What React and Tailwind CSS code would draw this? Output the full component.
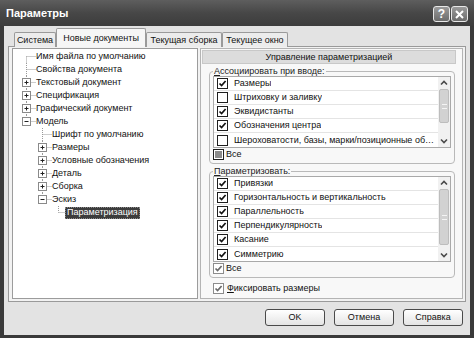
import React from "react";

const tree = [
  { t: "Имя файла по умолчанию", l: 0, first: true },
  { t: "Свойства документа", l: 0 },
  { t: "Текстовый документ", l: 0, e: "+" },
  { t: "Спецификация", l: 0, e: "+" },
  { t: "Графический документ", l: 0, e: "+" },
  { t: "Модель", l: 0, e: "-", last: true },
  { t: "Шрифт по умолчанию", l: 1 },
  { t: "Размеры", l: 1, e: "+" },
  { t: "Условные обозначения", l: 1, e: "+" },
  { t: "Деталь", l: 1, e: "+" },
  { t: "Сборка", l: 1, e: "+" },
  { t: "Эскиз", l: 1, e: "-", last: true },
  { t: "Параметризация", l: 2, last: true, sel: true },
];

function TreeGutter({ l, e, first, last }) {
  const w = 23 + 16 * l;
  const cx = 13.5 + 16 * l;
  const y1 = first ? 6.5 : 0;
  const y2 = last ? 6.5 : 13;
  return (
    <svg width={w} height="13" className="shrink-0">
      <line x1={cx} y1={y1} x2={cx} y2={y2} stroke="#9a9a9a" strokeDasharray="1 1" />
      <line x1={cx} y1="6.5" x2={cx + 9} y2="6.5" stroke="#9a9a9a" strokeDasharray="1 1" />
      {e && (
        <g>
          <rect x={cx - 4} y="2.5" width="8" height="8" fill="#fff" stroke="#8a8a8a" />
          <line x1={cx - 2} y1="6.5" x2={cx + 2} y2="6.5" stroke="#222" />
          {e === "+" && <line x1={cx} y1="4.5" x2={cx} y2="8.5" stroke="#222" />}
        </g>
      )}
    </svg>
  );
}

function Check({ state, light }) {
  return (
    <span
      className={
        light
          ? "w-[11px] h-[11px] border border-[#8c8c8c] bg-white flex items-center justify-center shrink-0"
          : "w-[11px] h-[11px] border border-[#1e1e1e] bg-white flex items-center justify-center shrink-0"
      }
    >
      {state === "on" && (
        <svg width="9" height="9" viewBox="0 0 9 9">
          <path d="M1.5 4.5 L3.6 6.6 L7.6 2" fill="none" stroke={light ? "#6a6a6a" : "#111"} strokeWidth="1.7" />
        </svg>
      )}
      {state === "mixed" && <span className="w-[7px] h-[7px] bg-[#8a8a8a]" />}
    </span>
  );
}

function Chevron({ up }) {
  return (
    <svg width="8" height="6" viewBox="0 0 8 6">
      <path d={up ? "M1 4.5 L4 1.5 L7 4.5" : "M1 1.5 L4 4.5 L7 1.5"} fill="none" stroke="#4a4a4a" strokeWidth="1.6" />
    </svg>
  );
}

function ScrollBar({ thumb }) {
  return (
    <div className="w-[12px] bg-[#f1f1f1] flex flex-col items-stretch shrink-0">
      <div className="h-[12px] flex items-center justify-center">
        <Chevron up />
      </div>
      <div className={thumb + " mx-[1px] rounded-[2px] bg-[#d2d2d2] border border-[#bdbdbd] flex items-center justify-center"}>
        <div className="w-[5px] h-[5px] border-y border-[#f4f4f4]" />
      </div>
      <div className="flex-1" />
      <div className="h-[12px] flex items-center justify-center">
        <Chevron />
      </div>
    </div>
  );
}

function List({ items, thumb }) {
  return (
    <div className="flex border border-[#a9a9a9] bg-white min-w-0">
      <div className="flex-1 min-w-0 flex flex-col">
        {items.map((it, i) => (
          <div key={i} className="h-[14px] flex items-center gap-[6px] pl-[3px] pr-[2px] border-b border-[#e4e4e4] last:border-b-0 min-w-0">
            <Check state={it.c ? "on" : "off"} />
            <span className="min-w-0 truncate whitespace-nowrap">{it.t}</span>
          </div>
        ))}
      </div>
      <ScrollBar thumb={thumb} />
    </div>
  );
}

const list1 = [
  { t: "Размеры", c: true },
  { t: "Штриховку и заливку", c: false },
  { t: "Эквидистанты", c: true },
  { t: "Обозначения центра", c: true },
  { t: "Шероховатости, базы, марки/позиционные обозначения", c: false },
];
const list2 = [
  { t: "Привязки", c: true },
  { t: "Горизонтальность и вертикальность", c: true },
  { t: "Параллельность", c: true },
  { t: "Перпендикулярность", c: true },
  { t: "Касание", c: true },
  { t: "Симметрию", c: true },
];

export default function App() {
  return (
    <div className="w-[474px] h-[338px] bg-[#3a3a3a] flex flex-col font-['Liberation_Sans',Arial,sans-serif] text-[9px] text-[#111] leading-none select-none">
      {/* Title bar */}
      <div className="h-[26px] shrink-0 flex items-center pl-[6px] pr-[6px] bg-gradient-to-b from-[#5e5e5e] via-[#474747] to-[#3c3c3c]">
        <span className="text-white font-bold text-[11px]">Параметры</span>
        <div className="ml-auto flex gap-[1px] mt-[2px]">
          <div className="w-[17px] h-[16px] rounded-[3px] border border-[#e8e8e8] bg-gradient-to-b from-[#9a9a9a] to-[#6c6c6c] flex items-center justify-center text-white font-bold text-[12px]">
            ?
          </div>
          <div className="w-[17px] h-[16px] rounded-[3px] border border-[#e8e8e8] bg-gradient-to-b from-[#9a9a9a] to-[#6c6c6c] flex items-center justify-center">
            <svg width="9" height="9" viewBox="0 0 9 9">
              <path d="M1 1 L8 8 M8 1 L1 8" stroke="#fff" strokeWidth="2" />
            </svg>
          </div>
        </div>
      </div>

      {/* Body */}
      <div className="flex-1 mx-[4px] mb-[3px] bg-[#e3e3e3] flex flex-col px-[4px]">
        {/* Tabs */}
        <div className="h-[20px] shrink-0 flex items-end pl-[6px] relative z-10">
          <div className="w-[42px] h-[15px] -mb-px border border-[#9a9a9a] border-b-0 rounded-t-[2px] bg-[#ececec] flex items-center justify-center">
            Система
          </div>
          <div className="w-[90px] h-[19px] -mb-px border border-[#9a9a9a] border-b-0 rounded-t-[2px] bg-[#f6f6f6] flex items-center justify-center">
            Новые документы
          </div>
          <div className="w-[76px] h-[15px] -mb-px border border-[#9a9a9a] border-b-0 rounded-t-[2px] bg-[#ececec] flex items-center justify-center">
            Текущая сборка
          </div>
          <div className="w-[66px] h-[15px] -mb-px border border-[#9a9a9a] border-b-0 rounded-t-[2px] bg-[#ececec] flex items-center justify-center">
            Текущее окно
          </div>
        </div>

        {/* Tab panel */}
        <div className="h-[256px] shrink-0 border border-[#9a9a9a] bg-[#f2f2f2] flex gap-[2px] pl-[3px] pr-[2px] pt-[1px] pb-[2px]">
          {/* Tree */}
          <div className="w-[186px] shrink-0 border border-[#9c9c9c] bg-white flex flex-col pt-[1px]">
            {tree.map((n, i) => (
              <div key={i} className="h-[13px] flex items-center whitespace-nowrap">
                <TreeGutter {...n} />
                {n.sel ? (
                  <span className="-ml-[3px] h-[12px] px-[1px] flex items-center bg-[#3c3c3c] text-white border border-dotted border-[#888]">
                    {n.t}
                  </span>
                ) : (
                  <span>{n.t}</span>
                )}
              </div>
            ))}
          </div>

          {/* Right panel */}
          <div className="flex-1 min-w-0 border border-[#b4b4b4] bg-[#f8f8f8] flex flex-col pl-[1px] pr-[6px] pt-[1px]">
            <div className="h-[14px] shrink-0 bg-[#dcdcdc] border border-[#c8c8c8] flex items-center justify-center">
              Управление параметризацией
            </div>

            <fieldset className="min-w-0 mt-[3px] ml-[7px] mr-[1px] border border-[#b9b9b9] rounded-[4px] px-[3px] pb-[3px]">
              <legend className="px-[1px] text-[#222]">
                <span className="underline">А</span>ссоциировать при вводе:
              </legend>
              <List items={list1} thumb="h-[34px]" />
              <div className="h-[11px] mt-[1px] flex items-center gap-[2px]">
                <Check state="mixed" />
                <span>Все</span>
              </div>
            </fieldset>

            <fieldset className="min-w-0 mt-[3px] ml-[7px] mr-[1px] border border-[#b9b9b9] rounded-[4px] px-[3px] pb-[3px]">
              <legend className="px-[1px] text-[#222]">
                <span className="underline">П</span>араметризовать:
              </legend>
              <List items={list2} thumb="h-[56px]" />
              <div className="h-[11px] mt-[1px] flex items-center gap-[2px]">
                <Check state="on" light />
                <span>Все</span>
              </div>
            </fieldset>

            <div className="h-[11px] mt-[5px] ml-[11px] flex items-center gap-[3px]">
              <Check state="on" light />
              <span>
                <span className="underline">Ф</span>иксировать размеры
              </span>
            </div>
          </div>
        </div>

        {/* Buttons */}
        <div className="flex justify-end gap-[9px] pr-[3px] mt-[7px]">
          {["OK", "Отмена", "Справка"].map((b) => (
            <div
              key={b}
              className="w-[60px] h-[17px] rounded-[3px] border border-[#4a4a4a] bg-gradient-to-b from-[#ffffff] to-[#e4e4e4] flex items-center justify-center"
            >
              {b}
            </div>
          ))}
        </div>
      </div>
    </div>
  );
}
